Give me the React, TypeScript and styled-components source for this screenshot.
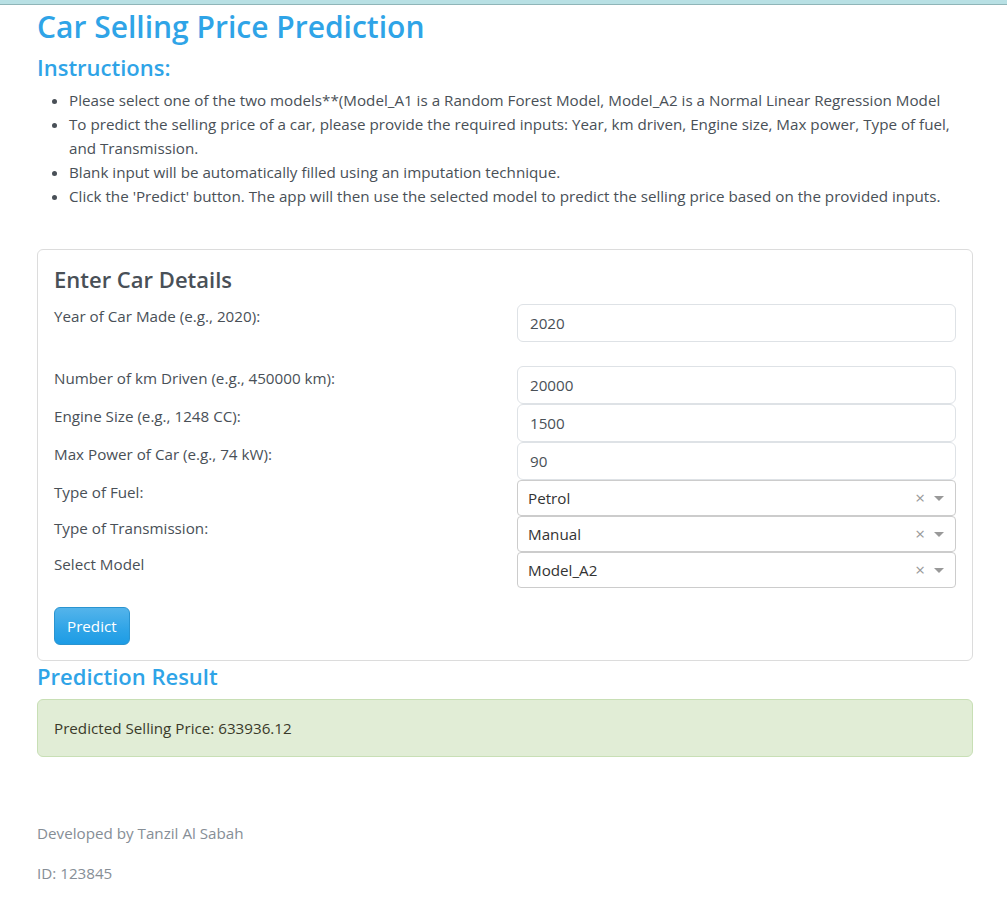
import React from "react";
import styled, { createGlobalStyle } from "styled-components";

const GlobalStyle = createGlobalStyle`
  * { box-sizing: border-box; }
  body {
    margin: 0;
    background: #fff;
    color: #495057;
    font-family: "Open Sans", "Noto Sans", sans-serif;
    font-size: 15.2px;
    line-height: 24px;
  }
`;

const TopBar = styled.div`
  height: 5px;
  background: #b8e0e4;
  border-bottom: 1px solid #8fb5b8;
`;

const Container = styled.div`
  width: 936px;
  margin-left: 37px;
`;

const Title = styled.h1`
  margin: 3px 0 0;
  color: #2fa4e7;
  font-size: 30px;
  line-height: 38px;
  font-weight: 600;
`;

const Heading = styled.h3<{ $dark?: boolean; $top?: number }>`
  margin: ${(p) => p.$top ?? 0}px 0 0;
  color: ${(p) => (p.$dark ? "#495057" : "#2fa4e7")};
  font-size: 22px;
  line-height: 30px;
  font-weight: 600;
`;

const List = styled.ul`
  margin: 6px 0 0;
  padding-left: 32px;
  li { margin: 0; }
`;

const Card = styled.div`
  margin-top: 41px;
  border: 1px solid #dcdcdc;
  border-radius: 6px;
  padding: 14px 16px 15px;
`;

const CardTitle = styled(Heading)`
  margin-bottom: 10px;
`;

const FormRow = styled.div<{ $gap?: number }>`
  display: grid;
  grid-template-columns: 1fr 1fr;
  column-gap: 24px;
  margin-bottom: ${(p) => p.$gap ?? 0}px;
`;

const Label = styled.label`
  display: block;
  line-height: 24px;
`;

const Input = styled.input`
  width: 100%;
  height: 38px;
  padding: 0 12px;
  border: 1px solid #dee2e6;
  border-radius: 6px;
  font: inherit;
  color: #495057;
  outline: none;
`;

const Select = styled.div`
  height: 36px;
  display: flex;
  align-items: center;
  padding: 0 10px;
  border: 1px solid #ccc;
  border-radius: 4px;
  color: #333;
`;

const SelectValue = styled.span`
  flex: 1;
`;

const Clear = styled.span`
  color: #999;
  font-size: 17px;
  margin-right: 9px;
`;

const Caret = styled.span`
  width: 0;
  height: 0;
  border-left: 5px solid transparent;
  border-right: 5px solid transparent;
  border-top: 5px solid #999;
  margin-right: 1px;
`;

const Button = styled.button`
  margin-top: 19px;
  height: 38px;
  padding: 0 12px;
  border: 1px solid #2a94d0;
  border-radius: 6px;
  background: linear-gradient(#54b4eb, #2fa4e7 60%, #1d9ce5);
  color: #fff;
  font: inherit;
`;

const Alert = styled.div`
  margin-top: 8px;
  padding: 16px;
  line-height: 24px;
  background: #e1edd6;
  border: 1px solid #c8dfb5;
  border-radius: 6px;
  color: #3a3a2a;
`;

const Footer = styled.div`
  margin-top: 64px;
  color: #868e96;
  p { margin: 0 0 16px; }
`;

const fields: { label: string; value: string; gap?: number }[] = [
  { label: "Year of Car Made (e.g., 2020):", value: "2020", gap: 24 },
  { label: "Number of km Driven (e.g., 450000 km):", value: "20000" },
  { label: "Engine Size (e.g., 1248 CC):", value: "1500" },
  { label: "Max Power of Car (e.g., 74 kW):", value: "90" },
];

const selects = [
  { label: "Type of Fuel:", value: "Petrol" },
  { label: "Type of Transmission:", value: "Manual" },
  { label: "Select Model", value: "Model_A2" },
];

export default function App() {
  return (
    <>
      <GlobalStyle />
      <TopBar />
      <Container>
        <Title>Car Selling Price Prediction</Title>
        <Heading $top={6}>Instructions:</Heading>
        <List>
          <li>
            Please select one of the two models**(Model_A1 is a Random Forest Model, Model_A2 is a Normal
            Linear Regression Model
          </li>
          <li>
            To predict the selling price of a car, please provide the required inputs: Year, km driven, Engine
            size, Max power, Type of fuel, and Transmission.
          </li>
          <li>Blank input will be automatically filled using an imputation technique.</li>
          <li>
            Click the 'Predict' button. The app will then use the selected model to predict the selling price
            based on the provided inputs.
          </li>
        </List>
        <Card>
          <CardTitle $dark>Enter Car Details</CardTitle>
          {fields.map((f) => (
            <FormRow key={f.label} $gap={f.gap}>
              <Label>{f.label}</Label>
              <Input defaultValue={f.value} />
            </FormRow>
          ))}
          {selects.map((s) => (
            <FormRow key={s.label}>
              <Label>{s.label}</Label>
              <Select>
                <SelectValue>{s.value}</SelectValue>
                <Clear>×</Clear>
                <Caret />
              </Select>
            </FormRow>
          ))}
          <Button>Predict</Button>
        </Card>
        <Heading>Prediction Result</Heading>
        <Alert>Predicted Selling Price: 633936.12</Alert>
        <Footer>
          <p>Developed by Tanzil Al Sabah</p>
          <p>ID: 123845</p>
        </Footer>
      </Container>
    </>
  );
}
